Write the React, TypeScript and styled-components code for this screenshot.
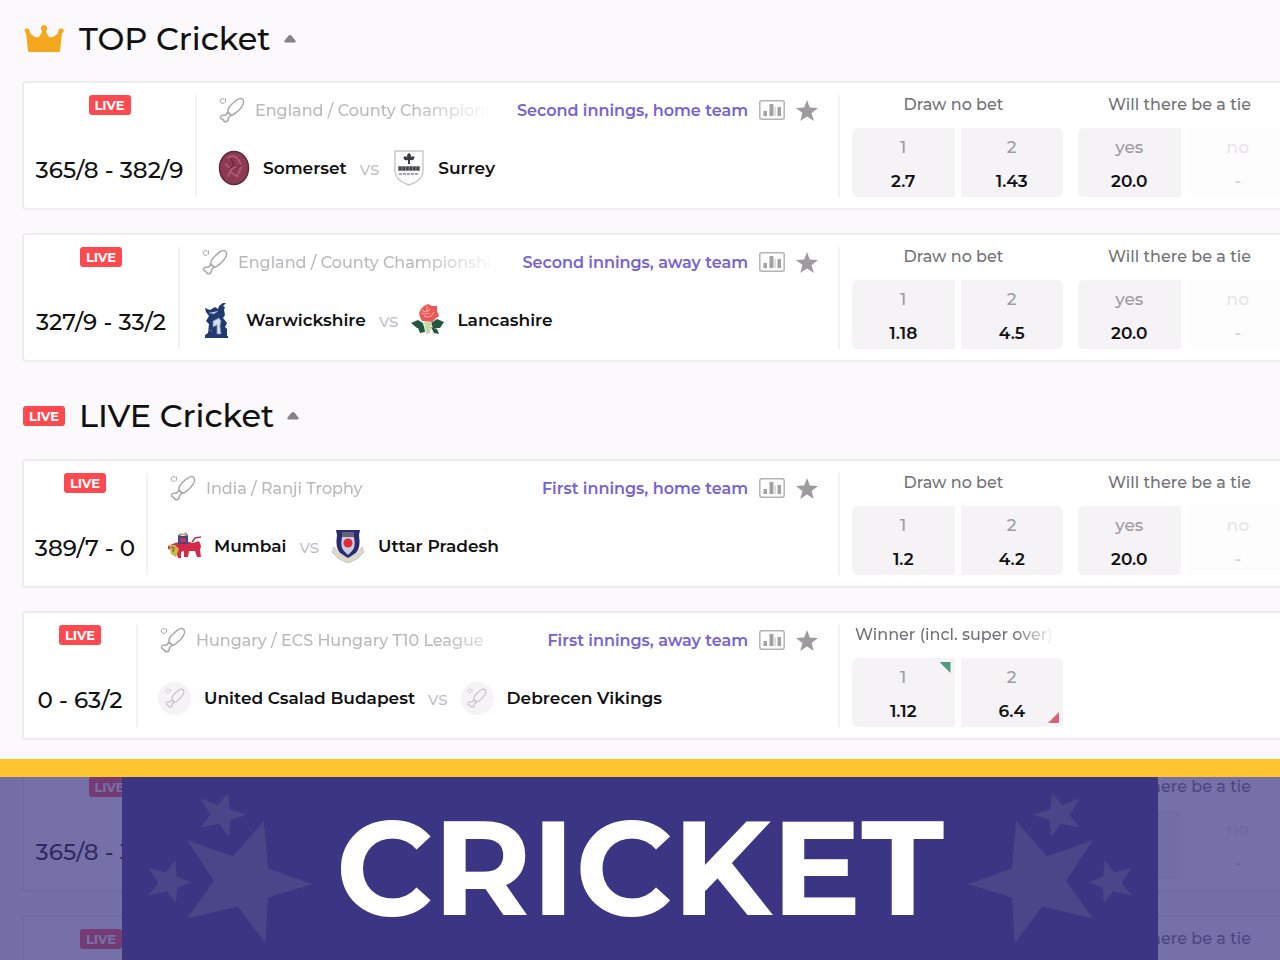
import React, { useState } from "react";
import styled, { createGlobalStyle } from "styled-components";

const GlobalStyle = createGlobalStyle`
  *, *::before, *::after { box-sizing: border-box; }
  body {
    margin: 0;
    background: #fbf9fc;
    color: #111;
    font-family: Montserrat, Inter, "Liberation Sans", sans-serif;
    font-size: 16px;
    font-weight: 500;
    overflow: hidden;
  }
  button { font: inherit; color: inherit; border: 0; padding: 0; background: none; cursor: pointer; }
  h1, h2, h3, p { margin: 0; font: inherit; }
  svg { display: block; flex: none; }
`;

const Page = styled.main`
  height: 100vh;
  overflow: hidden;
  padding-left: 22px;
`;

const Section = styled.section`
  display: flex;
  flex-direction: column;
`;

const SectionHeader = styled.header<{ $first?: boolean }>`
  display: flex;
  align-items: center;
  gap: 13px;
  height: ${(p) => (p.$first ? 81 : 97)}px;
  padding: ${(p) => (p.$first ? "0 0 4px" : "11px 0 0")};
`;

const SectionIcon = styled.span`
  display: flex;
  justify-content: center;
  width: 44px;
`;

const SectionTitle = styled.h2`
  font-size: 32px;
  line-height: 40px;
`;

const Collapse = styled.button`
  display: flex;
  align-items: center;
  height: 24px;
`;

const MatchList = styled.div`
  display: flex;
  flex-direction: column;
  gap: 23px;
`;

const Card = styled.article`
  display: flex;
  height: 129px;
  padding: 12px 0 11px;
  background: #fff;
  border: 2px solid #edebee;
  border-right: 0;
  border-radius: 4px 0 0 4px;
`;

const ScoreColumn = styled.div<{ $width: number }>`
  flex: none;
  width: ${(p) => p.$width}px;
  display: flex;
  flex-direction: column;
  align-items: center;
  justify-content: space-between;
  border-right: 2px solid #f3f1f4;
`;

const LiveBadge = styled.span`
  display: flex;
  align-items: center;
  justify-content: center;
  width: 42px;
  height: 20px;
  border-radius: 3px;
  background: #fd4a51;
  color: #fff;
  font-size: 13px;
  font-weight: 700;
`;

const Score = styled.p`
  font-size: 23px;
  line-height: 30px;
  padding-bottom: 12px;
  white-space: nowrap;
`;

const Info = styled.div`
  flex: 1;
  min-width: 0;
  display: flex;
  flex-direction: column;
  padding: 0 20px;
`;

const InfoTop = styled.div`
  display: flex;
  align-items: center;
  height: 30px;
  padding-left: 2px;
`;

const Tournament = styled.span`
  flex: 1;
  min-width: 0;
  margin: 0 24px 0 10px;
  overflow: hidden;
  white-space: nowrap;
  color: #bab8bc;
  mask-image: linear-gradient(to right, #000 calc(100% - 80px), transparent);
`;

const Phase = styled.a`
  color: #7762d3;
  font-weight: 600;
  text-decoration: none;
  white-space: nowrap;
`;

const IconButton = styled.button`
  display: flex;
  margin-left: 11px;
`;

const Teams = styled.div`
  display: flex;
  align-items: center;
  gap: 13px;
  height: 38px;
  margin-top: 24px;
  white-space: nowrap;
`;

const TeamLogo = styled.span`
  display: flex;
  align-items: center;
  justify-content: center;
  width: 33px;
  height: 36px;
`;

const TeamName = styled.h3`
  font-size: 17px;
  font-weight: 600;
`;

const Versus = styled.span`
  color: #bcbabf;
  font-size: 19px;
  font-weight: 400;
`;

const DefaultLogo = styled.span`
  display: flex;
  align-items: center;
  justify-content: center;
  width: 33px;
  height: 33px;
  border-radius: 50%;
  background: #f5f3f6;
`;

const Markets = styled.div`
  flex: none;
  width: 442px;
  display: flex;
  gap: 15px;
  padding-left: 12px;
  border-left: 2px solid #f3f1f4;
  overflow: hidden;
`;

const Market = styled.div`
  flex: none;
  width: 211px;
  display: flex;
  flex-direction: column;
  justify-content: space-between;
`;

const MarketTitle = styled.h3<{ $fade?: boolean }>`
  padding-left: ${(p) => (p.$fade ? 3 : 0)}px;
  margin-right: 8px;
  height: 22px;
  line-height: 20px;
  color: #737175;
  text-align: ${(p) => (p.$fade ? "left" : "center")};
  white-space: nowrap;
  overflow: hidden;
  mask-image: ${(p) => (p.$fade ? "linear-gradient(to right, #000 calc(100% - 40px), transparent)" : "none")};
`;

const Outcomes = styled.div`
  display: flex;
  gap: 6px;
`;

const Outcome = styled.button<{ $side: "left" | "right"; $off?: boolean }>`
  position: relative;
  flex: 1;
  display: flex;
  flex-direction: column;
  align-items: center;
  justify-content: space-between;
  height: 69px;
  padding: 9px 0 6px;
  border-radius: ${(p) => (p.$side === "left" ? "6px 0 0 6px" : "0 6px 6px 0")};
  background: ${(p) => (p.$off ? "#fefdfe" : "#f5f3f6")};
  font-size: 17px;
  font-weight: 600;
  line-height: 20px;
  color: ${(p) => (p.$off ? "#d5d3d7" : "#111")};
`;

const OutcomeLabel = styled.span<{ $off?: boolean }>`
  color: ${(p) => (p.$off ? "#e6e4e7" : "#9d9b9f")};
  font-weight: 500;
`;

const Trend = styled.span<{ $up?: boolean }>`
  position: absolute;
  right: 4px;
  ${(p) => (p.$up ? "top: 4px;" : "bottom: 4px;")}
  width: 11px;
  height: 11px;
  background: ${(p) => (p.$up ? "#4f9b7c" : "#d4647a")};
  clip-path: ${(p) => (p.$up ? "polygon(0 0, 100% 0, 100% 100%)" : "polygon(100% 0, 100% 100%, 0 100%)")};
`;

const Banner = styled.aside`
  position: fixed;
  left: 0;
  right: 0;
  bottom: 0;
  height: 201px;
  display: flex;
  justify-content: center;
  border-top: 18px solid #ffc531;
  background: rgba(59, 53, 131, 0.7);
  background-clip: padding-box;
`;

const BannerPanel = styled.div`
  width: 81%;
  display: flex;
  align-items: center;
  justify-content: space-between;
  padding: 0 25px;
  background: #3b3583;
`;

const BannerTitle = styled.h1`
  color: #fff;
  font-size: 134px;
  line-height: 140px;
  padding-bottom: 4px;
  font-weight: 700;
`;

const StarGroup = styled.svg<{ $mirrored?: boolean }>`
  width: 167px;
  height: 157px;
  fill: #4b4689;
  transform: ${(p) => (p.$mirrored ? "scaleX(-1)" : "none")};
`;

const BatIcon = ({ size = 26, color = "#aaa8ac" }: { size?: number; color?: string }) => (
  <svg width={size} height={size} viewBox="0 0 26 26" fill="none" stroke={color} strokeWidth="1.5" strokeLinejoin="round">
    <path d="M9.500 16C7.800 13.500 9.500 10.500 12.500 7.500C16 4 19.500 1.200 22 1.500C25 2 25.200 5.500 23.500 8.500C21.500 12 18 15.500 14.500 17.500C12.500 18.500 10.500 17.800 9.500 16Z" />
    <path d="M9 15L12.500 18.200L9.500 20.500Q9.800 24 7 24.800Q4.500 24.800 4 22.500Q1.200 22.200 1.500 19.500Q3 17.500 6.500 18.200Z" />
    <path d="M5.500 2.500A2.400 2.400 0 1 0 5.500 5.500M6.500 1.500V5.500" strokeWidth="1" />
  </svg>
);

const CrownIcon = () => (
  <svg width="42" height="28" viewBox="0 0 42 28" fill="#f5a81f">
    <path d="M5 26L3 8Q1 7 2 4Q5 2 6.500 5L7 8Q11 13 16 12L19 7Q16 1 21 0Q26 1 23 7L26 12Q31 13 35 8L35.500 5Q37 2 40 4Q42 7 39 8L37 26Q37 27 35.500 27H6.500Q5 27 5 26Z" />
  </svg>
);

const CaretIcon = () => (
  <svg width="12" height="8" viewBox="0 0 12 8" fill="#858387">
    <path d="M6 0Q7 0 7.800 1L11.400 5.500Q12.300 7.500 10.500 7.500H1.500Q-.3 7.500 .6 5.500L4.200 1Q5 0 6 0Z" />
  </svg>
);

const StatsIcon = () => (
  <svg width="26" height="20" viewBox="0 0 26 20">
    <rect x=".8" y=".8" width="24.400" height="18.400" rx="2" fill="none" stroke="#b5b3b6" strokeWidth="1.500" />
    <path d="M4.500 11h3.500v5H4.500zM10.500 4h4v12h-4zM18.500 7h3.500v9h-3.500z" fill="#a3a1a4" />
    <path d="M15.500 7h1.500v9h-1.500z" fill="#d9d7da" />
  </svg>
);

const StarIcon = () => (
  <svg width="22" height="21" viewBox="0 0 22 21" fill="#9d9b9e">
    <path d="M11 0L13.800 7.500L22 8L15.600 13L17.800 21L11 16.500L4.200 21L6.400 13L0 8L8.200 7.500Z" />
  </svg>
);

const Somerset = () => (
  <svg width="32" height="36" viewBox="0 0 32 36">
    <ellipse cx="16" cy="18" rx="14.500" ry="16.500" fill="#8d3a52" stroke="#5f2a3a" strokeWidth="1.500" />
    <path d="M9 8q6-4 10 0t4 9q-3 2-7 0l-4 5 8 5M7 14l6 5-3 8M20 10l4 6-5 10" fill="none" stroke="#a85a71" strokeWidth="1.800" />
    <path d="M13 9l3 6-5 4M18 19l6-4" fill="none" stroke="#6d2a3f" strokeWidth="1.500" />
  </svg>
);

const Surrey = () => (
  <svg width="30" height="36" viewBox="0 0 30 36">
    <path d="M1 1H29V22Q28 31 15 35Q2 31 1 22Z" fill="#fdfcfd" stroke="#c9c6cb" strokeWidth="1.400" />
    <path d="M15 3q3 2 1.500 4q4-2 4 1q-1 3-4.500 2v4h-2v-4q-4 1-4.500-2q0-3 4-1Q12 5 15 3Z" fill="#3c3a3e" />
    <path d="M4 16h22v5H4z" fill="#8b888d" />
    <path d="M5 18.500h20" stroke="#444" strokeWidth="3" strokeDasharray="2.500 1" />
    <path d="M5 24h20" stroke="#888" strokeWidth="1.500" strokeDasharray="3 1" />
  </svg>
);

const Warwickshire = () => (
  <svg width="26" height="36" viewBox="0 0 26 36" fill="#203a70">
    <path d="M1 6l5 2 5-3 3 2 1-3 4-3h3l-3 3 2 1-1 3 1 5-2 3 4 5-2 4 2 2v7h1v2H1v-3l3-2 1-9-3-3 3-5-3-4Z" />
    <path d="M9 19l6-3 2 3-1 5 1 8h-4v-9l-4 2ZM5 11l5 1 4-3M4 28l4 1" fill="#d5deeb" stroke="#7187b0" strokeWidth=".8" />
  </svg>
);

const Lancashire = () => (
  <svg width="34" height="32" viewBox="0 0 34 32">
    <path d="M0 19l7-3 5 3 1 5-7 0ZM20 19l6-4 7 3-4 6-7 0ZM7 24l6-2 1 6-5 1ZM20 23l6 2 2 5-5-1Z" fill="#24583e" />
    <path d="M13 17h8l-2 12-4 1Z" fill="#c9d8a7" />
    <path d="M10 5l3-3 4-2 4 2 5 0 0 5 2 5-4 3-3 3-5-1-5 0-2-4-1-4Z" fill="#e95756" />
    <path d="M11 6q5 4 8-1M13 12q7 3 10-4M10 9q5 2 9 0M16 2v5" fill="none" stroke="#f6a199" strokeWidth="1.200" />
  </svg>
);

const Mumbai = () => (
  <svg width="34" height="28" viewBox="0 0 34 28">
    <path d="M7 11l10-2 8 2 6-2 2 5-1 4 1 7h-4l-2-6-6 0-1 6h-4l0-6-3 1 0 6h-3l-2-7-8-2 0-3Z" fill="#d42a48" />
    <path d="M24 10l3-4 6-1M10 19l-2-4" fill="none" stroke="#b73655" strokeWidth="1.500" />
    <path d="M10 3l5 1 5-1 0 9H10Z" fill="#43458d" />
    <path d="M10 3l2-2 3 1 3-2 2 3Z" fill="#bda568" />
    <path d="M12 6h6v4h-6z" fill="#c43b50" />
    <path d="M1 13l6 0 4 4-3 8-5-3Z" fill="#cfb54a" />
    <path d="M3 15l3 1-1 4" fill="none" stroke="#6f7944" strokeWidth="1.500" />
  </svg>
);

const UttarPradesh = () => (
  <svg width="34" height="34" viewBox="0 0 34 34">
    <path d="M3 18l5 7 9 4 9-4 5-7 2 5-7 7-9 4-9-4-7-7Z" fill="#dedacb" stroke="#c2beb2" strokeWidth=".8" />
    <path d="M5 1h24l-1 5q2 13-3 18l-8 5-8-5Q4 19 6 6Z" fill="#2b2c70" />
    <path d="M11 4h12v4q2 10-2 14l-4 4-4-4Q9 18 11 8Z" fill="#c9cde2" />
    <path d="M11 3h12v5H11Z" fill="#60627f" />
    <circle cx="17" cy="14" r="4.500" fill="#e3293a" />
  </svg>
);

const DefaultTeam = () => (
  <DefaultLogo>
    <BatIcon size={20} color="#c5c3c7" />
  </DefaultLogo>
);

interface OutcomeData {
  label: string;
  odds: string;
  off?: boolean;
  trend?: "up" | "down";
}

interface MarketData {
  title: string;
  fade?: boolean;
  outcomes: OutcomeData[];
}

interface MatchData {
  score: string;
  scoreWidth: number;
  tournament: string;
  phase: string;
  home: string;
  away: string;
  HomeLogo: React.ComponentType;
  AwayLogo: React.ComponentType;
  markets: MarketData[];
}

const drawAndTie = (one: string, two: string): MarketData[] => [
  { title: "Draw no bet", outcomes: [{ label: "1", odds: one }, { label: "2", odds: two }] },
  { title: "Will there be a tie", outcomes: [{ label: "yes", odds: "20.0" }, { label: "no", odds: "-", off: true }] },
];

const somersetSurrey: MatchData = {
  score: "365/8 - 382/9",
  scoreWidth: 173,
  tournament: "England / County Championship",
  phase: "Second innings, home team",
  home: "Somerset",
  away: "Surrey",
  HomeLogo: Somerset,
  AwayLogo: Surrey,
  markets: drawAndTie("2.7", "1.43"),
};

const warwickshireLancashire: MatchData = {
  score: "327/9 - 33/2",
  scoreWidth: 156,
  tournament: "England / County Championship",
  phase: "Second innings, away team",
  home: "Warwickshire",
  away: "Lancashire",
  HomeLogo: Warwickshire,
  AwayLogo: Lancashire,
  markets: drawAndTie("1.18", "4.5"),
};

const topMatches = [somersetSurrey, warwickshireLancashire];

const liveMatches: MatchData[] = [
  {
    score: "389/7 - 0",
    scoreWidth: 124,
    tournament: "India / Ranji Trophy",
    phase: "First innings, home team",
    home: "Mumbai",
    away: "Uttar Pradesh",
    HomeLogo: Mumbai,
    AwayLogo: UttarPradesh,
    markets: drawAndTie("1.2", "4.2"),
  },
  {
    score: "0 - 63/2",
    scoreWidth: 114,
    tournament: "Hungary / ECS Hungary T10 League",
    phase: "First innings, away team",
    home: "United Csalad Budapest",
    away: "Debrecen Vikings",
    HomeLogo: DefaultTeam,
    AwayLogo: DefaultTeam,
    markets: [
      {
        title: "Winner (incl. super over)",
        fade: true,
        outcomes: [
          { label: "1", odds: "1.12", trend: "up" },
          { label: "2", odds: "6.4", trend: "down" },
        ],
      },
    ],
  },
  somersetSurrey,
  warwickshireLancashire,
];

const MatchCard = ({ match }: { match: MatchData }) => {
  const { HomeLogo, AwayLogo } = match;
  return (
    <Card>
      <ScoreColumn $width={match.scoreWidth}>
        <LiveBadge>LIVE</LiveBadge>
        <Score>{match.score}</Score>
      </ScoreColumn>
      <Info>
        <InfoTop>
          <BatIcon />
          <Tournament>{match.tournament}</Tournament>
          <Phase href="#match">{match.phase}</Phase>
          <IconButton aria-label="Statistics"><StatsIcon /></IconButton>
          <IconButton aria-label="Add to favourites"><StarIcon /></IconButton>
        </InfoTop>
        <Teams>
          <TeamLogo><HomeLogo /></TeamLogo>
          <TeamName>{match.home}</TeamName>
          <Versus>vs</Versus>
          <TeamLogo><AwayLogo /></TeamLogo>
          <TeamName>{match.away}</TeamName>
        </Teams>
      </Info>
      <Markets>
        {match.markets.map((market) => (
          <Market key={market.title}>
            <MarketTitle $fade={market.fade}>{market.title}</MarketTitle>
            <Outcomes>
              {market.outcomes.map((o, i) => (
                <Outcome key={o.label} $side={i === 0 ? "left" : "right"} $off={o.off} disabled={o.off}>
                  <OutcomeLabel $off={o.off}>{o.label}</OutcomeLabel>
                  <span>{o.odds}</span>
                  {o.trend && <Trend $up={o.trend === "up"} />}
                </Outcome>
              ))}
            </Outcomes>
          </Market>
        ))}
      </Markets>
    </Card>
  );
};

const MatchSection = ({ title, icon, matches, first }: { title: string; icon: React.ReactNode; matches: MatchData[]; first?: boolean }) => {
  const [open, setOpen] = useState(true);
  return (
    <Section>
      <SectionHeader $first={first}>
        <SectionIcon>{icon}</SectionIcon>
        <SectionTitle>{title}</SectionTitle>
        <Collapse aria-label={`Toggle ${title}`} aria-expanded={open} onClick={() => setOpen(!open)}>
          <CaretIcon />
        </Collapse>
      </SectionHeader>
      {open && (
        <MatchList>
          {matches.map((m, i) => <MatchCard key={i} match={m} />)}
        </MatchList>
      )}
    </Section>
  );
};

const Stars = ({ mirrored }: { mirrored?: boolean }) => (
  <StarGroup viewBox="440 120 500 470" $mirrored={mirrored} aria-hidden="true">
    <path d="M790 213L802 355L935 402L802 442L795 580L712 469L560 505L640 392L560 270L698 318Z" />
    <path d="M682 130L688 178L738 193L690 210L685 260L656 222L600 232L630 195L600 145L652 165Z" />
    <path d="M525 330L529 378L574 397L530 413L527 460L500 424L445 435L474 398L443 352L496 367Z" />
  </StarGroup>
);

export default function App() {
  return (
    <>
      <GlobalStyle />
      <Page>
        <MatchSection first title="TOP Cricket" icon={<CrownIcon />} matches={topMatches} />
        <MatchSection title="LIVE Cricket" icon={<LiveBadge>LIVE</LiveBadge>} matches={liveMatches} />
      </Page>
      <Banner>
        <BannerPanel>
          <Stars />
          <BannerTitle>CRICKET</BannerTitle>
          <Stars mirrored />
        </BannerPanel>
      </Banner>
    </>
  );
}
